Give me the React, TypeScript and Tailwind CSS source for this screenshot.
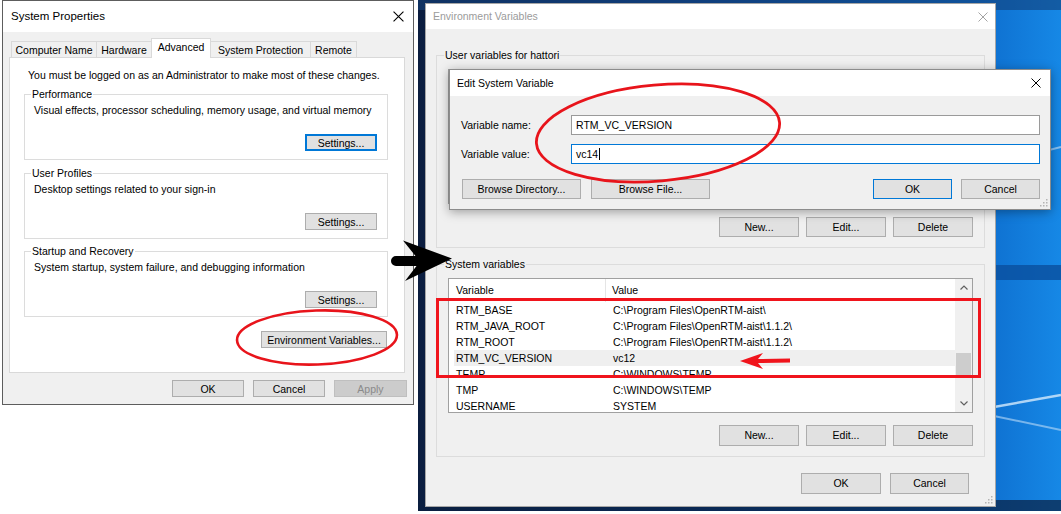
import React from 'react';

const CloseX = ({ color = '#000', size = 10 }: { color?: string; size?: number }) => (
  <svg width={size} height={size} viewBox="0 0 10 10">
    <path d="M0.5 0.5 L9.5 9.5 M9.5 0.5 L0.5 9.5" stroke={color} strokeWidth="1" fill="none" />
  </svg>
);

const Grip = () => (
  <svg width="9" height="9" viewBox="0 0 9 9" className="absolute right-[2px] bottom-[2px]">
    {[
      [7, 1],
      [4, 4],
      [7, 4],
      [1, 7],
      [4, 7],
      [7, 7],
    ].map(([x, y]) => (
      <rect key={`${x}-${y}`} x={x} y={y} width="1.5" height="1.5" fill="#b4b4b4" />
    ))}
  </svg>
);

const Btn = ({ label, className = '' }: { label: string; className?: string }) => (
  <div className={`flex items-center justify-center whitespace-nowrap ${className}`}>{label}</div>
);

// left dialog ------------------------------------------------------------

const tabs = [
  { label: 'Computer Name', w: 'w-[86px]', active: false },
  { label: 'Hardware', w: 'w-[56px]', active: false },
  { label: 'Advanced', w: 'w-[60px]', active: true },
  { label: 'System Protection', w: 'w-[101px]', active: false },
  { label: 'Remote', w: 'w-[47px]', active: false },
];

const Group = ({
  title,
  text,
  focused = false,
  className = '',
}: {
  title: string;
  text: string;
  focused?: boolean;
  className?: string;
}) => (
  <fieldset className={`border border-[#dcdcdc] pb-[8px] ${className}`}>
    <legend className="ml-[6px] px-[1px] leading-[12px]">{title}</legend>
    <div className="flex flex-col px-[9px]">
      <p className="mt-[4px] leading-[12px]">{text}</p>
      <Btn
        label="Settings..."
        className={
          focused
            ? 'self-end mr-[1px] mt-[18px] w-[72px] h-[17px] bg-[#e1e1e1] border-2 border-[#0078d7]'
            : 'self-end mr-[1px] mt-[18px] w-[72px] h-[17px] bg-[#e1e1e1] border border-[#adadad]'
        }
      />
    </div>
  </fieldset>
);

const SystemProperties = () => (
  <div className="absolute left-[2px] top-0 w-[412px] h-[405px] border border-[#5d5d5d] bg-[#f0f0f0] flex flex-col text-black font-['Liberation_Sans',Arial,sans-serif]">
    <div className="h-[31px] shrink-0 bg-white flex items-center justify-between pl-[8px] pr-[9px]">
      <span className="text-[11.5px]">System Properties</span>
      <CloseX size={11} />
    </div>
    <div className="flex flex-col pl-[6px] pr-[8px] pt-[6px] text-[10.5px] leading-[12px]">
      <div className="flex items-end h-[19px] ml-[2px]">
        {tabs.map((t, i) =>
          t.active ? (
            <div
              key={t.label}
              className={`${t.w} h-[20px] -mb-px -ml-px relative z-10 bg-white border-t border-l border-r border-[#d9d9d9] flex items-center justify-center pb-[3px]`}
            >
              {t.label}
            </div>
          ) : (
            <div
              key={t.label}
              className={`${t.w} h-[16px] ${i === 0 ? '' : '-ml-px'} bg-[#f0f0f0] border-t border-l border-r border-[#d9d9d9] flex items-center justify-center whitespace-nowrap`}
            >
              {t.label}
            </div>
          )
        )}
      </div>
      <div className="h-[316px] border border-[#d9d9d9] bg-white flex flex-col pl-[14px] pr-[16px] pt-[11px]">
        <p className="ml-[4px] whitespace-nowrap">You must be logged on as an Administrator to make most of these changes.</p>
        <Group
          className="mt-[7px]"
          title="Performance"
          text="Visual effects, processor scheduling, memory usage, and virtual memory"
          focused
        />
        <Group className="mt-[7px]" title="User Profiles" text="Desktop settings related to your sign-in" />
        <Group
          className="mt-[6px]"
          title="Startup and Recovery"
          text="System startup, system failure, and debugging information"
        />
        <Btn
          label="Environment Variables..."
          className="self-end mr-[1px] mt-[14px] w-[126px] h-[17px] bg-[#e1e1e1] border border-[#adadad]"
        />
      </div>
      <div className="flex justify-end gap-[9px] mt-[7px] -mr-[2px]">
        <Btn label="OK" className="w-[72px] h-[17px] bg-[#e1e1e1] border border-[#adadad]" />
        <Btn label="Cancel" className="w-[72px] h-[17px] bg-[#e1e1e1] border border-[#adadad]" />
        <Btn label="Apply" className="w-[73px] h-[17px] bg-[#cccccc] border border-[#bfbfbf] text-[#8a8a8a]" />
      </div>
    </div>
  </div>
);

// environment variables ----------------------------------------------------

const sysRows: [string, string][] = [
  ['RTM_BASE', 'C:\\Program Files\\OpenRTM-aist\\'],
  ['RTM_JAVA_ROOT', 'C:\\Program Files\\OpenRTM-aist\\1.1.2\\'],
  ['RTM_ROOT', 'C:\\Program Files\\OpenRTM-aist\\1.1.2\\'],
  ['RTM_VC_VERSION', 'vc12'],
  ['TEMP', 'C:\\WINDOWS\\TEMP'],
  ['TMP', 'C:\\WINDOWS\\TEMP'],
  ['USERNAME', 'SYSTEM'],
];

const Scrollbar = () => (
  <div className="w-[17px] shrink-0 bg-[#f0f0f0] flex flex-col">
    <div className="h-[17px] flex items-center justify-center">
      <svg width="8" height="5" viewBox="0 0 8 5">
        <path d="M0.5 4.5 L4 1 L7.5 4.5" stroke="#606060" strokeWidth="1.2" fill="none" />
      </svg>
    </div>
    <div className="flex-1 flex flex-col px-[1px]">
      <div className="mt-[57px] h-[24px] bg-[#cdcdcd]" />
    </div>
    <div className="h-[17px] flex items-center justify-center">
      <svg width="8" height="5" viewBox="0 0 8 5">
        <path d="M0.5 0.5 L4 4 L7.5 0.5" stroke="#606060" strokeWidth="1.2" fill="none" />
      </svg>
    </div>
  </div>
);

// the user list sits under the edit dialog, so it is drawn as an empty box
const ListBox = ({ rows, className = '' }: { rows: [string, string][]; className?: string }) => (
  <div className={`h-[135px] border border-[#a0a0a0] bg-white flex overflow-hidden ${className}`}>
    {rows.length > 0 && (
      <>
        <div className="flex-1 min-w-0 flex flex-col">
          <div className="h-[23px] shrink-0 flex items-center">
            <div className="w-[157px] h-full pl-[7px] flex items-center border-r border-[#e5e5e5]">Variable</div>
            <div className="pl-[6px]">Value</div>
          </div>
          {rows.map(([n, v]) => (
            <div
              key={n}
              className={`h-[16px] shrink-0 ml-[5px] flex items-center whitespace-nowrap ${
                n === 'RTM_VC_VERSION' ? 'bg-[#efefef]' : ''
              }`}
            >
              <div className="w-[152px] pl-[2px]">{n}</div>
              <div className="pl-[7px]">{v}</div>
            </div>
          ))}
        </div>
        <Scrollbar />
      </>
    )}
  </div>
);

const GroupButtons = ({ h }: { h: string }) => (
  <div className="flex justify-end gap-[7px]">
    <Btn label="New..." className={`w-[80px] ${h} bg-[#e1e1e1] border border-[#adadad]`} />
    <Btn label="Edit..." className={`w-[80px] ${h} bg-[#e1e1e1] border border-[#adadad]`} />
    <Btn label="Delete" className={`w-[80px] ${h} bg-[#e1e1e1] border border-[#adadad]`} />
  </div>
);

const EnvWindow = () => (
  <div className="absolute left-[7px] top-[3px] w-[571px] h-[504px] border border-[#a6a6a6] bg-[#f0f0f0] flex flex-col">
    <div className="h-[25px] shrink-0 bg-white flex items-center justify-between pl-[7px] pr-[7px] text-[#9b9b9b]">
      <span>Environment Variables</span>
      <CloseX color="#a3a3a3" />
    </div>
    <div className="flex flex-col px-[10px] pt-[20px]">
      <fieldset className="border border-[#dcdcdc] h-[199px]">
        <legend className="ml-[7px] px-[1px] leading-[12px]">User variables for hattori</legend>
        <div className="flex flex-col px-[11px]">
          <ListBox rows={[]} className="mt-[8px]" />
          <div className="mt-[13px]">
            <GroupButtons h="h-[20px]" />
          </div>
        </div>
      </fieldset>
      <fieldset className="border border-[#dcdcdc] h-[199px] mt-[10px]">
        <legend className="ml-[7px] px-[1px] leading-[12px]">System variables</legend>
        <div className="flex flex-col px-[11px]">
          <ListBox rows={sysRows} className="mt-[8px]" />
          <div className="mt-[12px]">
            <GroupButtons h="h-[21px]" />
          </div>
        </div>
      </fieldset>
      <div className="flex justify-end gap-[9px] mt-[16px] mr-[16px]">
        <Btn label="OK" className="w-[80px] h-[21px] bg-[#e1e1e1] border border-[#adadad]" />
        <Btn label="Cancel" className="w-[79px] h-[21px] bg-[#e1e1e1] border border-[#adadad]" />
      </div>
    </div>
    <Grip />
  </div>
);

const EditDialog = () => (
  <div className="absolute left-[31px] top-[69px] w-[602px] h-[141px] border border-[#8c8c8c] bg-[#f0f0f0] shadow-[0_2px_10px_rgba(0,0,0,0.35)] flex flex-col">
    <div className="h-[26px] shrink-0 bg-white flex items-center justify-between pl-[7px] pr-[9px]">
      <span>Edit System Variable</span>
      <CloseX />
    </div>
    <div className="flex flex-col pl-[11px] pr-[10px] pt-[19px]">
      <div className="flex items-center h-[20px]">
        <span className="w-[110px] shrink-0">Variable name:</span>
        <div className="flex-1 h-full border border-[#9a9a9a] bg-white flex items-center pl-[4px]">RTM_VC_VERSION</div>
      </div>
      <div className="flex items-center h-[20px] mt-[9px]">
        <span className="w-[110px] shrink-0">Variable value:</span>
        <div className="flex-1 h-full border border-[#0078d7] bg-white flex items-center pl-[4px]">
          vc14
          <span className="w-px h-[12px] bg-black ml-[1px]" />
        </div>
      </div>
      <div className="flex items-center justify-between mt-[15px]">
        <div className="flex gap-[10px] ml-[1px]">
          <Btn label="Browse Directory..." className="w-[119px] h-[20px] bg-[#e1e1e1] border border-[#adadad]" />
          <Btn label="Browse File..." className="w-[119px] h-[20px] bg-[#e1e1e1] border border-[#adadad]" />
        </div>
        <div className="flex gap-[9px]">
          <Btn label="OK" className="w-[79px] h-[20px] bg-[#e1e1e1] border border-[#0078d7]" />
          <Btn label="Cancel" className="w-[79px] h-[20px] bg-[#e1e1e1] border border-[#adadad]" />
        </div>
      </div>
    </div>
    <Grip />
  </div>
);

const Desktop = () => (
  <div className="absolute left-[418px] top-0 w-[643px] h-[511px] bg-[linear-gradient(90deg,#0b1d3f_0%,#0b3a7c_40%,#0e6fcf_88%,#1688e6_100%)] text-black text-[10.5px] leading-[13px] font-['Liberation_Sans',Arial,sans-serif]">
    {/* wallpaper light beams */}
    <svg className="absolute inset-0" width="643" height="511" viewBox="0 0 643 511">
      <rect x="0" y="0" width="643" height="10" fill="#133f78" opacity="0.6" />
      <rect x="570" y="265" width="73" height="15" fill="#0a4f9e" opacity="0.8" />
      <path d="M600 158 L643 147" stroke="#cfe6fb" strokeWidth="2" opacity="0.6" />
      <path d="M576 407 L643 395" stroke="#d6ebfd" strokeWidth="2.5" opacity="0.8" />
      <path d="M576 416 L643 430" stroke="#bcdcf8" strokeWidth="2" opacity="0.6" />
      <rect x="0" y="500" width="643" height="11" fill="#0a1f40" opacity="0.7" />
    </svg>
    <EnvWindow />
    <EditDialog />
  </div>
);

const Marks = () => (
  <svg className="absolute inset-0 pointer-events-none" width="1061" height="514" viewBox="0 0 1061 514">
    <ellipse
      cx="317"
      cy="337.5"
      rx="80"
      ry="27"
      transform="rotate(-2 317 337.5)"
      fill="none"
      stroke="#e8141b"
      strokeWidth="2.6"
    />
    <ellipse
      cx="658"
      cy="133"
      rx="122"
      ry="48"
      transform="rotate(-5 658 133)"
      fill="none"
      stroke="#e8141b"
      strokeWidth="2.8"
    />
    <rect x="437.5" y="299.5" width="542" height="77" fill="none" stroke="#f0141c" strokeWidth="3" />
    <path d="M740 361 L763 353 L758 359 L790 358.5 L790 362.5 L758 363 L763 369 Z" fill="#f0141c" />
    <path
      d="M452 258.5 L403 240.5 L415.5 256 L396 256 A5 5 0 0 0 396 266 L416.5 266 L405 281 Z"
      fill="#000"
    />
  </svg>
);

export default function App() {
  return (
    <div className="relative w-[1061px] h-[514px] bg-white overflow-hidden">
      <SystemProperties />
      <Desktop />
      <Marks />
    </div>
  );
}
